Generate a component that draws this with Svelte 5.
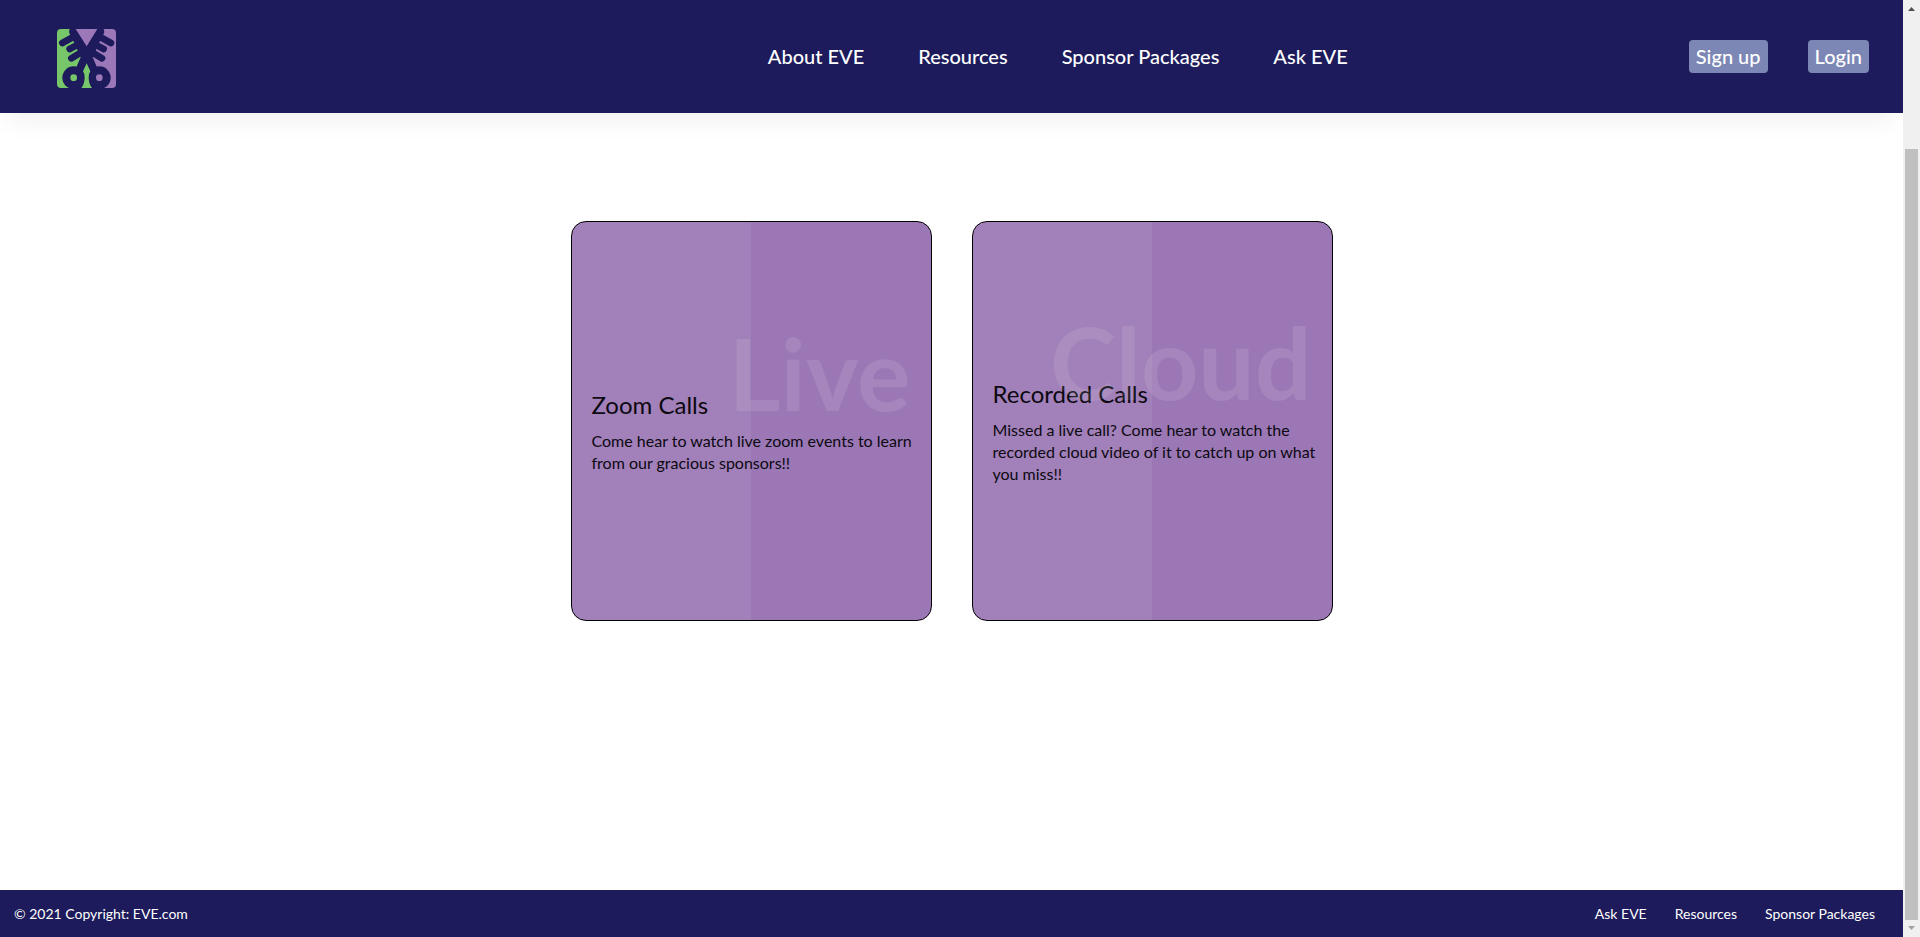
<script>
  const links = ['About EVE', 'Resources', 'Sponsor Packages', 'Ask EVE'];
  const footerLinks = ['Ask EVE', 'Resources', 'Sponsor Packages'];
  const cards = [
    {
      ghost: 'Live',
      title: 'Zoom Calls',
      text: 'Come hear to watch live zoom events to learn from our gracious sponsors!!'
    },
    {
      ghost: 'Cloud',
      title: 'Recorded Calls',
      text: 'Missed a live call? Come hear to watch the recorded cloud video of it to catch up on what you miss!!'
    }
  ];
</script>

<div class="window">
  <div class="page">
    <header>
      <a class="logo" href="#home" aria-label="EVE home">
        <svg viewBox="0 0 177 177" width="59" height="59" aria-hidden="true">
          <defs>
            <clipPath id="badge"><rect width="177" height="177" rx="12" /></clipPath>
          </defs>
          <g clip-path="url(#badge)">
            <rect width="89" height="177" fill="#77c66a" />
            <path d="M50 0H177V177H89V56Z" fill="#9c78b8" />
            <path d="M38 0Q33 12 42 20L71 85L58 115V177H120V115L107 85L136 20Q145 12 140 0H121L89 52L56 0Z" fill="#1d1b5b" />
            <g stroke="#1d1b5b" stroke-linecap="round" fill="none" stroke-width="20">
              <path d="M16 42L54 21M38 60L68 44M43 88L76 68" />
              <path d="M162 42L124 21M140 60L110 44M135 88L102 68" />
            </g>
            <circle cx="50" cy="146" r="34" fill="#1d1b5b" />
            <circle cx="127" cy="146" r="34" fill="#1d1b5b" />
            <circle cx="50" cy="146" r="10" fill="#77c66a" />
            <circle cx="127" cy="146" r="10" fill="#9c78b8" />
            <path d="M89 103L100 127Q95 134 95 145Q95 165 105 177H73Q83 165 83 145Q83 134 78 127Z" fill="#77c66a" />
          </g>
        </svg>
      </a>
      <nav class="links" aria-label="Main">
        {#each links as link}
          <a href="#main">{link}</a>
        {/each}
      </nav>
      <div class="account">
        <button type="button">Sign up</button>
        <button type="button">Login</button>
      </div>
    </header>

    <main>
      {#each cards as card}
        <article class="card">
          <div class="content">
            <span class="ghost">{card.ghost}</span>
            <h3>{card.title}</h3>
            <p>{card.text}</p>
          </div>
        </article>
      {/each}
    </main>

    <footer>
      <span>© 2021 Copyright: EVE.com</span>
      <nav aria-label="Footer">
        {#each footerLinks as link}
          <a href="#footer">{link}</a>
        {/each}
      </nav>
    </footer>
  </div>

  <div class="scrollbar" aria-hidden="true">
    <svg width="17" height="17"><path d="M5 11H12L8.500 7Z" fill="#505050" /></svg>
    <div class="track"><div class="thumb"></div></div>
    <svg width="17" height="17"><path d="M5 6H12L8.500 10Z" fill="#a3a3a3" /></svg>
  </div>
</div>

<style>
  :global(body) {
    margin: 0;
    background: #fff;
  }
  .window {
    display: flex;
    min-height: 100vh;
    font-family: Lato, 'Liberation Sans', sans-serif;
  }
  .page {
    flex: 1;
    min-width: 0;
    display: flex;
    flex-direction: column;
    overflow: hidden;
  }
  a {
    color: #fff;
    text-decoration: none;
  }
  header {
    display: grid;
    grid-template-columns: 15fr auto 11fr;
    padding: 29px 34px 25px 57px;
    background: #1d1b5b;
    box-shadow: 0 16px 24px -8px rgba(0, 0, 0, 0.06);
  }
  .logo {
    display: flex;
  }
  .links {
    display: flex;
    align-items: center;
    gap: 54px;
    padding-bottom: 6px;
    font-size: 20px;
    font-weight: 500;
    line-height: 24px;
  }
  .account {
    display: flex;
    align-items: center;
    justify-content: flex-end;
    gap: 40px;
    padding-bottom: 4px;
  }
  button {
    padding: 4px 7px;
    border: 0;
    border-radius: 4px;
    background: #7c87b5;
    color: #fff;
    font: 500 20px/25px Lato, 'Liberation Sans', sans-serif;
  }
  main {
    flex: 1;
    display: flex;
    flex-wrap: wrap;
    justify-content: center;
    align-items: flex-start;
    gap: 40px;
    padding: 108px 40px 40px;
  }
  .card {
    box-sizing: border-box;
    display: flex;
    align-items: center;
    width: 361px;
    min-height: 400px;
    padding: 20px 8px 20px 20px;
    border: 1px solid #000;
    border-radius: 15px;
    background: linear-gradient(90deg, #a280b9 50%, #9b78b5 50%);
  }
  .content {
    position: relative;
    padding-top: 22px;
    color: #0c0911;
  }
  .ghost {
    position: absolute;
    right: 12px;
    top: -57px;
    font-size: 100px;
    line-height: 120px;
    font-weight: 700;
    color: rgba(255, 255, 255, 0.1);
  }
  h3 {
    margin: 0 0 11px;
    font-size: 24px;
    line-height: 28px;
    font-weight: 400;
  }
  p {
    margin: 0;
    font-size: 16px;
    line-height: 22px;
  }
  footer {
    display: flex;
    justify-content: space-between;
    padding: 15px 28px 14px 14px;
    background: #1d1b5b;
    color: #fff;
    font-size: 14px;
    line-height: 18px;
  }
  footer nav {
    display: flex;
    gap: 28px;
  }
  .scrollbar {
    display: flex;
    flex-direction: column;
    width: 17px;
    background: #f0f0f0;
  }
  .track {
    flex: 1;
    display: flex;
    align-items: flex-end;
    padding: 0 2px;
  }
  .thumb {
    width: 100%;
    height: 85.4%;
    background: #c0c0c0;
  }
</style>
